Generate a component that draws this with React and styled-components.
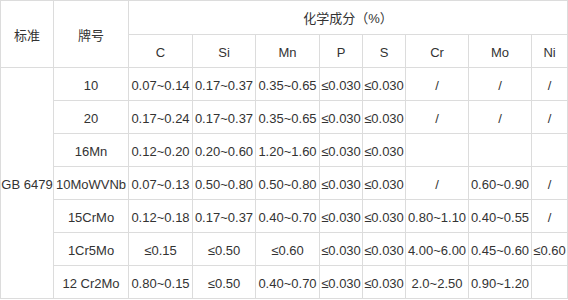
import React from "react";
import styled, { createGlobalStyle } from "styled-components";

const GlobalStyle = createGlobalStyle`
  html, body {
    margin: 0;
    padding: 0;
    background: #fff;
  }
  body {
    font-family: "Liberation Sans", "Noto Sans CJK SC", sans-serif;
    color: #333;
  }
`;

const Table = styled.table`
  border-collapse: collapse;
  table-layout: fixed;
  width: 567px;
  font-size: 13px;
  color: #333;
`;

const Cell = styled.td`
  border: 1px solid #dcdcdc;
  padding: 3px 0 0;
  text-align: center;
  vertical-align: middle;
  white-space: nowrap;
  overflow: visible;
  line-height: 18px;
`;

const HeadRow = styled.tr`
  height: ${(p) => p.$h || 33}px;
`;

const Row = styled.tr`
  height: 33px;
`;

const widths = [53, 75, 64, 63, 64, 43, 43, 63, 63, 36];
const elements = ["C", "Si", "Mn", "P", "S", "Cr", "Mo", "Ni"];

const rows = [
  ["10", "0.07~0.14", "0.17~0.37", "0.35~0.65", "≤0.030", "≤0.030", "/", "/", "/"],
  ["20", "0.17~0.24", "0.17~0.37", "0.35~0.65", "≤0.030", "≤0.030", "/", "/", "/"],
  ["16Mn", "0.12~0.20", "0.20~0.60", "1.20~1.60", "≤0.030", "≤0.030", "", "", ""],
  ["10MoWVNb", "0.07~0.13", "0.50~0.80", "0.50~0.80", "≤0.030", "≤0.030", "/", "0.60~0.90", "/"],
  ["15CrMo", "0.12~0.18", "0.17~0.37", "0.40~0.70", "≤0.030", "≤0.030", "0.80~1.10", "0.40~0.55", "/"],
  ["1Cr5Mo", "≤0.15", "≤0.50", "≤0.60", "≤0.030", "≤0.030", "4.00~6.00", "0.45~0.60", "≤0.60"],
  ["12 Cr2Mo", "0.80~0.15", "≤0.50", "0.40~0.70", "≤0.030", "≤0.030", "2.0~2.50", "0.90~1.20", ""],
];

export default function App() {
  return (
    <>
      <GlobalStyle />
      <Table>
        <colgroup>
          {widths.map((w, i) => (
            <col key={i} style={{ width: w }} />
          ))}
        </colgroup>
        <tbody>
          <HeadRow $h={34}>
            <Cell rowSpan={2}>标准</Cell>
            <Cell rowSpan={2}>牌号</Cell>
            <Cell colSpan={8}>化学成分（%）</Cell>
          </HeadRow>
          <HeadRow>
            {elements.map((e) => (
              <Cell key={e}>{e}</Cell>
            ))}
          </HeadRow>
          {rows.map((r, i) => (
            <Row key={r[0]}>
              {i === 0 && <Cell rowSpan={rows.length}>GB 6479</Cell>}
              {r.map((v, j) => (
                <Cell key={j}>{v}</Cell>
              ))}
            </Row>
          ))}
        </tbody>
      </Table>
    </>
  );
}
